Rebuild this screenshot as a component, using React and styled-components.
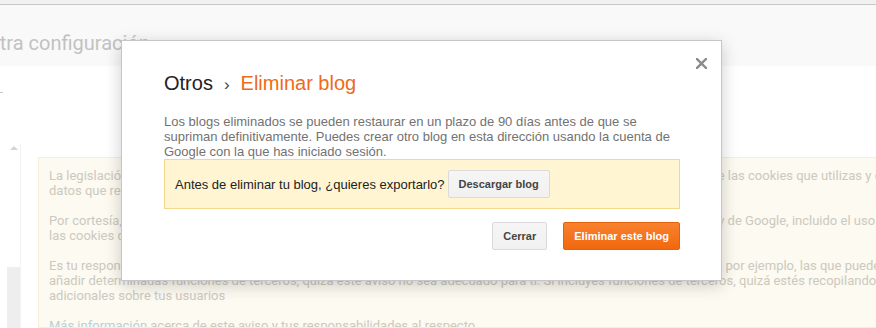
import React from 'react'
import styled, { createGlobalStyle } from 'styled-components'

const GlobalStyle = createGlobalStyle`
  html, body {
    margin: 0;
    padding: 0;
    background: #ffffff;
  }
  body {
    font-family: "Liberation Sans", Arial, sans-serif;
  }
`

const Page = styled.div`
  position: relative;
  width: 876px;
  height: 328px;
  overflow: hidden;
  display: flex;
  flex-direction: column;
  background: #ffffff;
`

const TopStrip = styled.div`
  height: 4px;
  flex: none;
  background: #f1f1f1;
  border-bottom: 1px solid #c9c9c9;
`

const Header = styled.div`
  height: 61px;
  flex: none;
  background: #f9f9f9;
  display: flex;
  align-items: flex-start;
`

const PageTitle = styled.h1`
  margin: 26px 0 0 -14px;
  font-family: Roboto, "Liberation Sans", sans-serif;
  font-weight: 400;
  font-size: 20px;
  line-height: 24px;
  color: #c2c2c2;
  white-space: nowrap;
`

const Body = styled.div`
  flex: 1;
  display: flex;
  min-height: 0;
`

const Sidebar = styled.div`
  width: 38px;
  flex: none;
  display: flex;
  flex-direction: column;
`

const Dash = styled.div`
  width: 3px;
  height: 1px;
  margin-top: 26px;
  background: #c8c8c8;
`

const ScrollTrack = styled.div`
  margin: 51px 0 0 7px;
  width: 13px;
  flex: 1;
  display: flex;
  flex-direction: column;
  align-items: center;
  border-right: 1px solid #f2f2f2;
`

const ArrowUp = styled.div`
  width: 0;
  height: 0;
  margin-top: 2px;
  border-left: 4px solid transparent;
  border-right: 4px solid transparent;
  border-bottom: 4px solid #d4d4d4;
`

const Thumb = styled.div`
  margin-top: 117px;
  width: 13px;
  flex: 1;
  background: #eeeeee;
`

const Content = styled.div`
  flex: 1;
  display: flex;
  flex-direction: column;
  padding-top: 91px;
  min-width: 0;
`

const Notice = styled.div`
  flex: 1;
  background: #fcfaf1;
  border: 1px solid #f4efdb;
  border-right: none;
  padding: 10px 0 0 10px;
  font-family: Roboto, "Liberation Sans", sans-serif;
  font-size: 13px;
  line-height: 15px;
  color: #cdc9be;
  overflow: hidden;
`

const Para = styled.p`
  margin: 0 0 15px;
  white-space: nowrap;
`

const Line = styled.span`
  display: block;
`

const Link = styled.span`
  color: #b7d1d8;
`

const Dialog = styled.div`
  position: absolute;
  left: 121px;
  top: 40px;
  width: 599px;
  height: 239px;
  background: #ffffff;
  border: 1px solid #c6c6c6;
  box-shadow: 0 4px 16px rgba(0, 0, 0, 0.2);
`

const DialogInner = styled.div`
  padding: 30px 41px 0 42px;
  display: flex;
  flex-direction: column;
`

const CloseButton = styled.button`
  position: absolute;
  top: 15px;
  right: 13px;
  width: 14px;
  height: 14px;
  padding: 0;
  border: none;
  background: none;
  cursor: pointer;
  display: flex;
  align-items: center;
  justify-content: center;
`

const Breadcrumb = styled.div`
  display: flex;
  align-items: baseline;
  font-size: 20px;
  line-height: 24px;
  color: #222222;
`

const Separator = styled.span`
  margin: 0 11px 0 11px;
  font-size: 17px;
  color: #444444;
`

const Current = styled.span`
  color: #ef6a1a;
`

const Description = styled.p`
  margin: 17px 0 0;
  font-size: 13px;
  line-height: 15px;
  color: #727272;
`

const ExportBox = styled.div`
  display: flex;
  align-items: center;
  gap: 3px;
  padding: 10px;
  background: #fff5d2;
  border: 1px solid #f2d88a;
  font-size: 13px;
  color: #222222;
`

const Button = styled.button`
  height: 28px;
  padding: 0 ${p => p.$pad || 10}px;
  font-family: "Liberation Sans", Arial, sans-serif;
  font-size: 11px;
  font-weight: 700;
  border-radius: 2px;
  cursor: default;
  color: ${p => (p.$primary ? '#ffffff' : '#444444')};
  background: ${p =>
    p.$primary
      ? 'linear-gradient(#f9812e, #f1680f)'
      : 'linear-gradient(#f5f5f5, #f1f1f1)'};
  border: 1px solid ${p => (p.$primary ? '#e3610c' : '#dadada')};
`

const Actions = styled.div`
  margin-top: 13px;
  display: flex;
  justify-content: flex-end;
  gap: 16px;
`

export default function App() {
  return (
    <>
      <GlobalStyle />
      <Page>
        <TopStrip />
        <Header>
          <PageTitle>Otra configuración</PageTitle>
        </Header>
        <Body>
          <Sidebar>
            <Dash />
            <ScrollTrack>
              <ArrowUp />
              <Thumb />
            </ScrollTrack>
          </Sidebar>
          <Content>
            <Notice>
              <Para>
                <Line>La legislación de la Unión Europea te obliga a proporcionar a los visitantes de la U.E. la información acerca del uso de las cookies que utilizas y de los</Line>
                <Line>datos que recopilas en tu blog. En muchos casos, esta legislación también exige que obtengas su consentimiento.</Line>
              </Para>
              <Para>
                <Line>Por cortesía, hemos añadido un aviso en tu blog para explicar el uso que hace Google de ciertas cookies de Blogger y de Google, incluido el uso de</Line>
                <Line>las cookies de Google Analytics y AdSense.</Line>
              </Para>
              <Para>
                <Line>Es tu responsabilidad confirmar que este aviso funciona bien en tu blog y que se muestra. Si tú utilizas otras cookies, por ejemplo, las que puedes</Line>
                <Line>añadir determinadas funciones de terceros, quizá este aviso no sea adecuado para ti. Si incluyes funciones de terceros, quizá estés recopilando datos</Line>
                <Line>adicionales sobre tus usuarios</Line>
              </Para>
              <Para>
                <Link>Más información</Link> acerca de este aviso y tus responsabilidades al respecto.
              </Para>
            </Notice>
          </Content>
        </Body>

        <Dialog>
          <CloseButton aria-label="Cerrar">
            <svg width="11" height="11" viewBox="0 0 11 11">
              <path d="M1 1 L10 10 M10 1 L1 10" stroke="#8a8a8a" strokeWidth="2.4" strokeLinecap="square" />
            </svg>
          </CloseButton>
          <DialogInner>
            <Breadcrumb>
              <span>Otros</span>
              <Separator>›</Separator>
              <Current>Eliminar blog</Current>
            </Breadcrumb>
            <Description>
              Los blogs eliminados se pueden restaurar en un plazo de 90 días antes de que se
              supriman definitivamente. Puedes crear otro blog en esta dirección usando la cuenta de
              Google con la que has iniciado sesión.
            </Description>
            <ExportBox>
              <span>Antes de eliminar tu blog, ¿quieres exportarlo?</span>
              <Button>Descargar blog</Button>
            </ExportBox>
            <Actions>
              <Button>Cerrar</Button>
              <Button $primary>Eliminar este blog</Button>
            </Actions>
          </DialogInner>
        </Dialog>
      </Page>
    </>
  )
}
